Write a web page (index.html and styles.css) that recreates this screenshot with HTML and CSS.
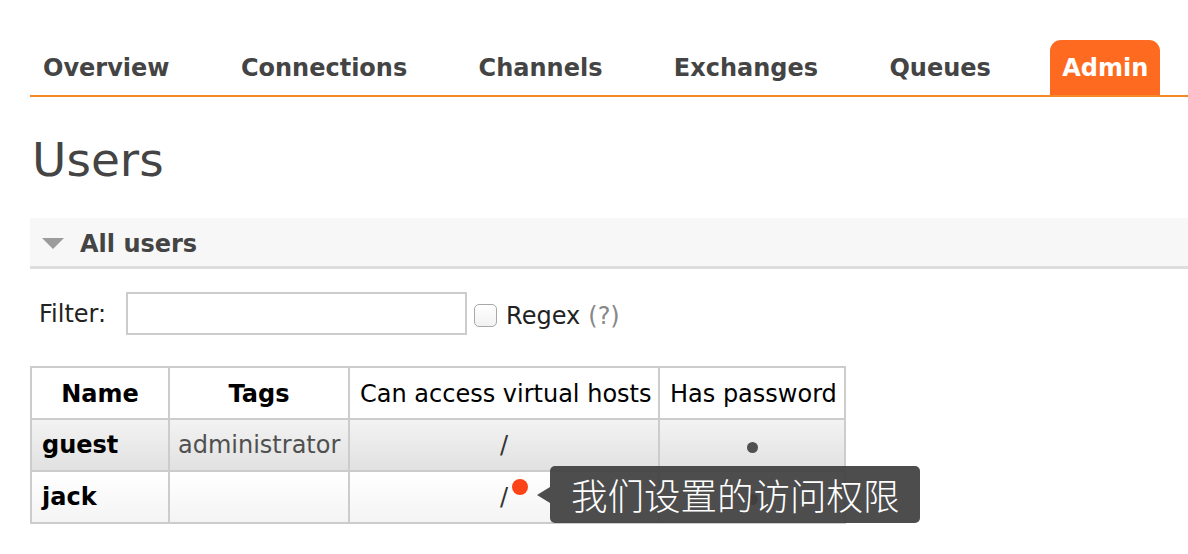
FILE: index.html
```html
<!DOCTYPE html>
<html lang="zh">
<head>
<meta charset="utf-8">
<title>RabbitMQ Management - Users</title>
<link rel="stylesheet" href="styles.css">
</head>
<body>
<div class="page">
  <ul class="tabs">
    <li class="tab">Overview</li>
    <li class="tab">Connections</li>
    <li class="tab">Channels</li>
    <li class="tab">Exchanges</li>
    <li class="tab">Queues</li>
    <li class="tab active">Admin</li>
  </ul>

  <h1 class="title">Users</h1>

  <div class="section">
    <div class="section-head">
      <span class="tri"></span>
      <h2 class="section-title">All users</h2>
    </div>

    <div class="filter">
      <label class="filter-label">Filter:</label>
      <input class="filter-input" type="text">
      <input class="chk" type="checkbox">
      <span class="regex">Regex</span>
      <span class="help">(?)</span>
    </div>

    <div class="table-wrap">
      <table class="users">
        <colgroup>
          <col class="c1"><col class="c2"><col class="c3"><col class="c4">
        </colgroup>
        <thead>
          <tr>
            <th class="b">Name</th>
            <th class="b">Tags</th>
            <th>Can access virtual hosts</th>
            <th>Has password</th>
          </tr>
        </thead>
        <tbody>
          <tr class="alt1">
            <td class="name">guest</td>
            <td class="tags">administrator</td>
            <td class="vh">/</td>
            <td class="pw"><span class="bullet"></span></td>
          </tr>
          <tr class="alt0">
            <td class="name">jack</td>
            <td class="tags"></td>
            <td class="vh">/</td>
            <td class="pw"><span class="bullet"></span></td>
          </tr>
        </tbody>
      </table>
      <span class="dot"></span>
      <div class="tip">我们设置的访问权限</div>
    </div>
  </div>
</div>
</body>
</html>
```

FILE: styles.css
```css
html, body {
  margin: 0;
  padding: 0;
  background: #fff;
}

body {
  font-family: "DejaVu Sans", Verdana, sans-serif;
  font-size: 24px;
  color: #484848;
}

.page {
  padding: 40px 0 0 30px;
}

.tabs {
  list-style: none;
  margin: 0;
  padding: 0 0 0 1px;
  display: flex;
  gap: 47.4px;
  border-bottom: 2px solid #f5892a;
}

.tab {
  height: 55px;
  line-height: 57px;
  padding: 0 12px;
  font-weight: bold;
  font-size: 24px;
  color: #444;
}

.tab.active {
  background: #ff6a21;
  color: #fff;
  border-radius: 11px 11px 0 0;
}

.title {
  margin: 40px 0 0 2px;
  font-size: 47px;
  line-height: 46px;
  font-weight: normal;
  color: #444;
}

.section {
  margin-top: 35px;
}

.section-head {
  display: flex;
  align-items: center;
  height: 48px;
  background: #f7f7f7;
  border-bottom: 3px solid #ddd;
  padding-left: 12px;
}

.tri {
  width: 0;
  height: 0;
  border-left: 11px solid transparent;
  border-right: 11px solid transparent;
  border-top: 11px solid #9c9c9c;
  margin-right: 16px;
  margin-top: 2px;
}

.section-title {
  margin: 0;
  font-size: 24px;
  line-height: 28px;
  margin-top: 3px;
  font-weight: bold;
  color: #444;
}

.filter {
  display: flex;
  align-items: center;
  margin-top: 23px;
  padding-left: 9px;
  height: 43px;
  color: #222;
}

.filter-label {
  margin-right: 20px;
}

.filter-input {
  width: 341px;
  height: 43px;
  box-sizing: border-box;
  border: 2px solid #ccc;
  margin: 0 7px 0 0;
  padding: 0;
  background: #fff;
}

.chk {
  appearance: none;
  -webkit-appearance: none;
  width: 23px;
  height: 23px;
  box-sizing: border-box;
  border: 1px solid #a8a8a8;
  border-radius: 5px;
  margin: 3px 9px 0 0;
  background: linear-gradient(#fff, #f2f2f2);
}

.regex {
  margin-top: 4px;
}

.help {
  color: #888;
  margin: 4px 0 0 8px;
}

.table-wrap {
  position: relative;
  margin-top: 31px;
}

.users {
  border-collapse: collapse;
  table-layout: fixed;
  width: 814px;
  border: 2px solid #ccc;
}

.c1 { width: 138px; }
.c2 { width: 180px; }
.c3 { width: 310px; }
.c4 { width: 186px; }

.users th,
.users td {
  border: 2px solid #ccc;
  padding: 11px 10px;
  line-height: 28px;
  height: 28px;
  text-align: center;
  white-space: nowrap;
  color: #000;
}

.users th {
  font-weight: normal;
  background: #fff;
  padding-top: 12px;
  padding-bottom: 10px;
}

.users th.b {
  font-weight: bold;
}

.users td.name {
  text-align: left;
  font-weight: bold;
  color: #000;
}

.users td.tags {
  color: #505050;
  padding-left: 8px;
  padding-right: 8px;
}

.users td.vh {
  color: #333;
}

.bullet {
  display: inline-block;
  width: 11px;
  height: 11px;
  border-radius: 50%;
  background: #505050;
  vertical-align: middle;
  margin-top: 2px;
}

.alt1 td {
  background: linear-gradient(#f3f3f3, #e1e1e1);
}

.alt0 td {
  background: linear-gradient(#fff, #f4f4f4);
}

.dot {
  position: absolute;
  left: 482px;
  top: 113px;
  width: 16px;
  height: 16px;
  border-radius: 50%;
  background: #fb4318;
}

.tip {
  position: absolute;
  left: 520px;
  top: 100px;
  height: 57px;
  box-sizing: border-box;
  padding: 0 20px 0 21px;
  line-height: 57px;
  background: rgba(64, 64, 64, 0.93);
  border-radius: 5px;
  color: #fff;
  font-family: "Noto Sans CJK SC", "Noto Sans", sans-serif;
  font-weight: 300;
  font-size: 36.5px;
  white-space: nowrap;
}

.tip::before {
  content: "";
  position: absolute;
  left: -13px;
  top: 21px;
  width: 0;
  height: 0;
  border-top: 8px solid transparent;
  border-bottom: 8px solid transparent;
  border-right: 13px solid rgba(64, 64, 64, 0.93);
}
```
